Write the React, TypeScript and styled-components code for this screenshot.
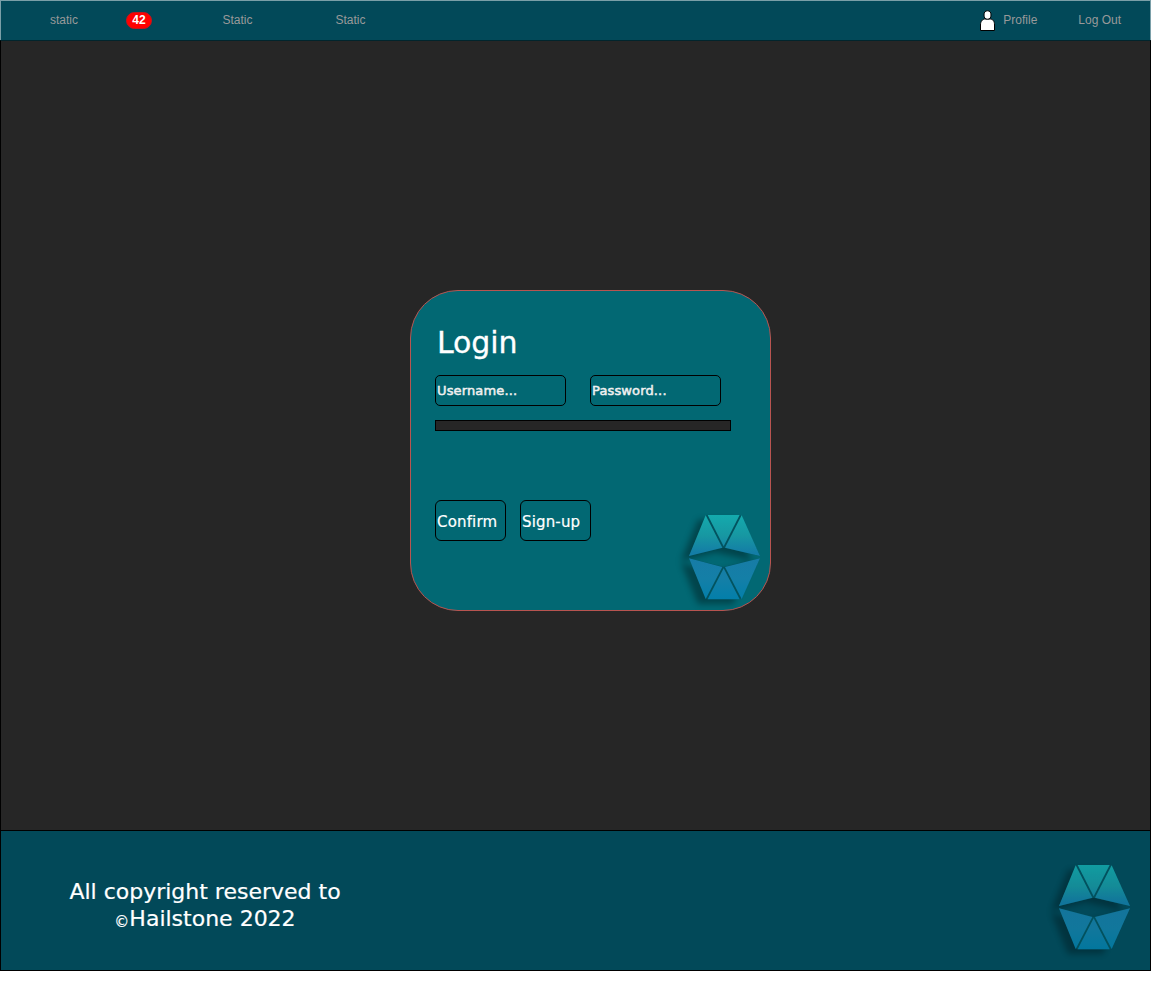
import React from "react";
import styled, { createGlobalStyle } from "styled-components";

const GlobalStyle = createGlobalStyle`
  *, *::before, *::after { box-sizing: border-box; }
  body { margin: 0; background: #fff; }
`;

const verdana = `Verdana, "DejaVu Sans", sans-serif`;

const Page = styled.div`
  width: 1151px;
  height: 971px;
  display: flex;
  flex-direction: column;
`;

const NavBar = styled.header`
  height: 40px;
  flex: none;
  display: flex;
  align-items: center;
  padding: 0 29px 0 49px;
  background: #024959;
  border: 1px solid #7a9fa8;
  border-bottom: 0;
  font: 12px/14px "Liberation Sans", Arial, sans-serif;
  color: #999;
`;

const NavItem = styled.span<{ $width?: number }>`
  width: ${(p) => (p.$width ? `${p.$width}px` : "auto")};
  flex: none;
  padding-bottom: 2px;
  white-space: nowrap;
`;

const Badge = styled.span`
  width: 26px;
  height: 17px;
  margin-right: 70.4px;
  border: 1px solid #c8141a;
  border-radius: 9px;
  background: #f00;
  color: #fff;
  font-weight: bold;
  line-height: 15px;
  text-align: center;
`;

const NavRight = styled.div`
  display: flex;
  align-items: center;
  margin-left: auto;
`;

const PersonIcon = styled.svg`
  display: block;
  margin-right: 7px;
`;

const Main = styled.main`
  height: 790px;
  flex: none;
  display: flex;
  align-items: flex-start;
  padding: 249px 0 0 409px;
  background: #262626;
  border: solid #000;
  border-width: 1px 1px 0;
  border-top-color: #01252d;
`;

const Card = styled.form`
  width: 361px;
  height: 321px;
  display: flex;
  flex-direction: column;
  align-items: flex-start;
  padding: 34px 0 0 24px;
  background: #026873;
  border: 1px solid #b85450;
  border-radius: 48px;
  font-family: ${verdana};
  color: #fff;
`;

const Title = styled.h1`
  margin: 0 0 14px 2px;
  font-size: 30px;
  line-height: 36px;
  font-weight: normal;
  letter-spacing: -0.1px;
  -webkit-text-stroke: 0.3px #fff;
`;

const Fields = styled.div`
  display: flex;
  gap: 24px;
`;

const Field = styled.div`
  width: 131px;
  height: 31px;
  padding-left: 1px;
  border: 1px solid #000;
  border-radius: 5px;
  font-size: 13px;
  line-height: 29px;
  letter-spacing: 0.14px;
  color: #f0f0f0;
  -webkit-text-stroke: 0.5px #f0f0f0;
`;

const Bar = styled.div`
  width: 296px;
  height: 11px;
  margin-top: 14px;
  background: #262626;
  border: 1px solid #000;
`;

const CardBottom = styled.div`
  width: 100%;
  display: flex;
  justify-content: space-between;
  align-items: flex-start;
  padding-top: 69px;
`;

const Actions = styled.div`
  display: flex;
  gap: 14px;
`;

const Button = styled.div`
  width: 71px;
  height: 41px;
  padding-left: 1px;
  border: 1px solid #000;
  border-radius: 6px;
  font-size: 15px;
  line-height: 43px;
  letter-spacing: 0.16px;
  -webkit-text-stroke: 0.2px #fff;
  white-space: nowrap;
`;

const LogoSvg = styled.svg<{ $top: number; $faded?: boolean }>`
  display: block;
  flex: none;
  width: 90px;
  height: 100px;
  margin-top: ${(p) => p.$top}px;
  overflow: visible;
  opacity: ${(p) => (p.$faded ? 0.86 : 1)};
`;

const Footer = styled.footer`
  height: 141px;
  flex: none;
  display: flex;
  justify-content: space-between;
  align-items: flex-start;
  padding: 0 10px 0 58px;
  background: #024959;
  border: 1px solid #000;
`;

const Copyright = styled.p`
  width: 292px;
  margin: 47px 0 0;
  text-align: center;
  font-family: ${verdana};
  font-size: 22px;
  line-height: 27px;
  color: #fff;
  -webkit-text-stroke: 0.2px #fff;
  white-space: nowrap;
`;

const Mark = styled.span`
  display: inline-block;
  width: 15px;
  font-size: 15px;
  line-height: 14px;
  vertical-align: -1px;
`;

function Logo({ id, top, faded }: { id: string; top: number; faded?: boolean }) {
  return (
    <LogoSvg viewBox="30 30 270 300" $top={top} $faded={faded}>
      <defs>
        <linearGradient id={`${id}-upper`} gradientUnits="userSpaceOnUse" x1="0" y1="45" x2="0" y2="170">
          <stop offset="0" stopColor="#14aaad" />
          <stop offset="0.5" stopColor="#1797a2" />
          <stop offset="0.9" stopColor="#147da6" />
        </linearGradient>
        <linearGradient id={`${id}-lower`} gradientUnits="userSpaceOnUse" x1="0" y1="175" x2="0" y2="298">
          <stop offset="0" stopColor="#177ca6" />
          <stop offset="0.5" stopColor="#147fa7" />
          <stop offset="1" stopColor="#037faa" />
        </linearGradient>
        <filter id={`${id}-blur`} x="-30%" y="-30%" width="160%" height="160%">
          <feGaussianBlur stdDeviation="10" />
        </filter>
      </defs>
      <g fill="#000" opacity="0.34" filter={`url(#${id}-blur)`}>
        <path d="M84 59H189L245 182L137 157L33 182Z" />
        <path d="M33 189L137 215L245 189L189 312H84Z" />
      </g>
      <path fill="#02535f" d="M110 45H211L270 168L161 143L57 168ZM57 175L161 201L270 175L211 298H110Z" />
      <g fill={`url(#${id}-upper)`}>
        <path d="M113 45H209L161 139Z" />
        <path d="M107 46L157 143L57 168Z" />
        <path d="M215 46L270 168L165 143Z" />
      </g>
      <g fill={`url(#${id}-lower)`}>
        <path d="M161 205L209 298H113Z" />
        <path d="M57 175L157 201L107 297Z" />
        <path d="M270 175L165 201L215 297Z" />
      </g>
    </LogoSvg>
  );
}

export default function App() {
  return (
    <>
      <GlobalStyle />
      <Page>
        <NavBar>
          <NavItem $width={76}>static</NavItem>
          <Badge>42</Badge>
          <NavItem $width={113}>Static</NavItem>
          <NavItem>Static</NavItem>
          <NavRight>
            <PersonIcon width="17" height="22" viewBox="0 0 17 22" fill="#fff" stroke="#000">
              <path d="M1.5 20.5V15C1.5 11 3.5 9.5 5.5 9H11.5C14 9.5 15.5 11 15.5 15V20.5Z" />
              <ellipse cx="8.5" cy="5" rx="3.5" ry="4.2" />
            </PersonIcon>
            <NavItem $width={75}>Profile</NavItem>
            <NavItem>Log Out</NavItem>
          </NavRight>
        </NavBar>
        <Main>
          <Card>
            <Title>Login</Title>
            <Fields>
              <Field>Username...</Field>
              <Field>Password...</Field>
            </Fields>
            <Bar />
            <CardBottom>
              <Actions>
                <Button>Confirm</Button>
                <Button>Sign-up</Button>
              </Actions>
              <Logo id="card-logo" top={10} />
            </CardBottom>
          </Card>
        </Main>
        <Footer>
          <Copyright>
            All copyright reserved to
            <br />
            <Mark>©</Mark>Hailstone 2022
          </Copyright>
          <Logo id="footer-logo" top={29} faded />
        </Footer>
      </Page>
    </>
  );
}
